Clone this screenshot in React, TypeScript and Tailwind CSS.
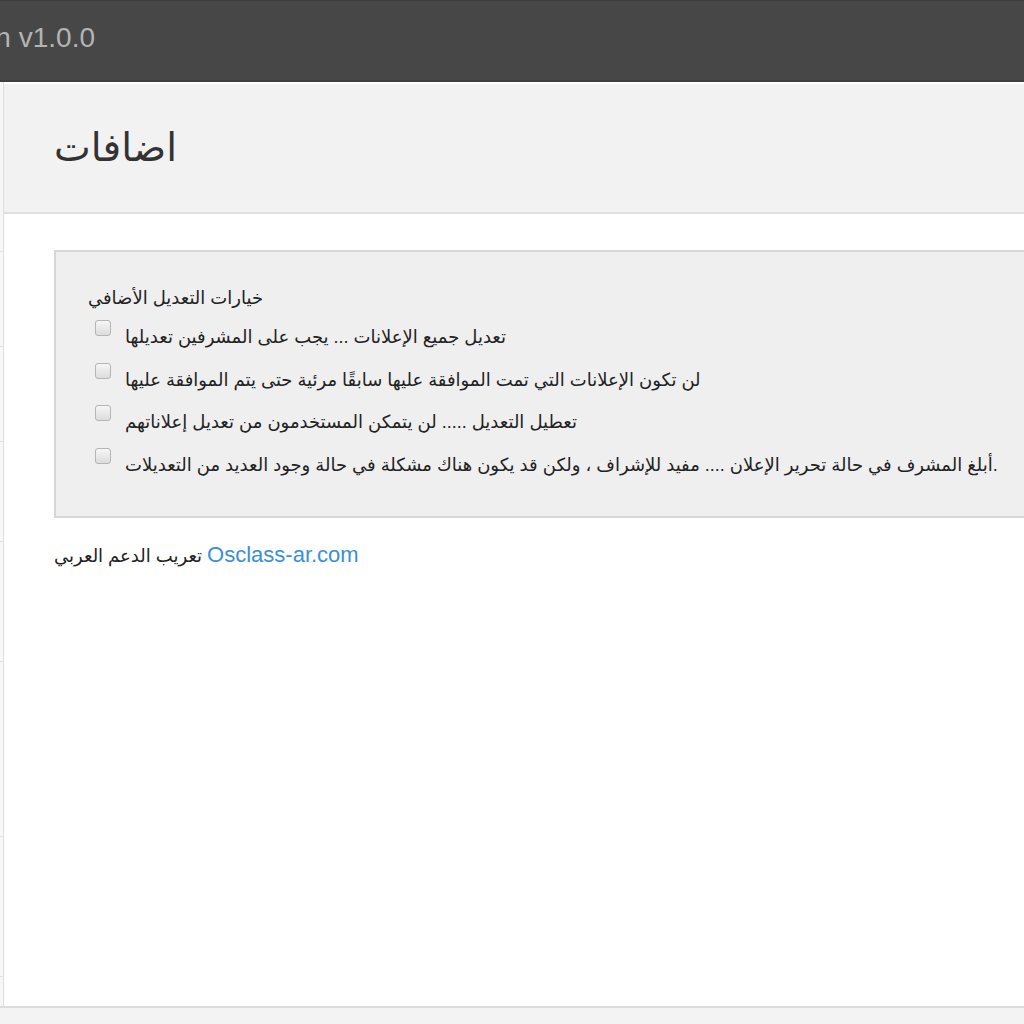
const font = { fontFamily: '"Liberation Sans", "DejaVu Sans", Arial, sans-serif' }

const options = [
  'تعديل جميع الإعلانات ... يجب على المشرفين تعديلها',
  'لن تكون الإعلانات التي تمت الموافقة عليها سابقًا مرئية حتى يتم الموافقة عليها',
  'تعطيل التعديل ..... لن يتمكن المستخدمون من تعديل إعلاناتهم',
  'أبلغ المشرف في حالة تحرير الإعلان .... مفيد للإشراف ، ولكن قد يكون هناك مشكلة في حالة وجود العديد من التعديلات.',
]

const sideTicks = [88, 95, 95, 100, 120, 175, 140]

export default function App() {
  return (
    <div className="h-[1024px] w-[1024px] overflow-hidden flex flex-col bg-white" style={font}>
      {/* top bar */}
      <div className="h-[82px] shrink-0 bg-[#474747] border-t border-[#3c3c3c] border-b-2 border-b-[#3e3e3e] flex items-center">
        <div className="w-[95px] overflow-hidden flex justify-end -mt-[6px]">
          <span className="whitespace-nowrap shrink-0 text-[28px] text-[#b4b4b4]">Moderation v1.0.0</span>
        </div>
      </div>

      <div className="flex-1 flex min-h-0">
        {/* sidebar edge */}
        <div className="w-[4px] shrink-0 border-r border-[#dedede] bg-[#f7f7f7] flex flex-col pt-[82px]">
          {sideTicks.map((h, i) => (
            <div key={i} className="border-b border-[#e2e2e2]" style={{ height: h }} />
          ))}
        </div>

        <div className="flex-1 flex flex-col min-w-0">
          {/* page title */}
          <div className="h-[130px] shrink-0 mt-[2px] bg-[#f2f2f2] border-b-2 border-[#e0e0e0] flex items-center pl-[50px]">
            <h1 className="text-[39px] text-[#333] leading-none -mt-[2px]">اضافات</h1>
          </div>

          {/* content */}
          <div className="flex-1 pl-[50px] pt-[36px]">
            <div className="w-[1000px] h-[268px] bg-[#efefef] border-2 border-[#d6d6d6] pl-[32px] pt-[34px]">
              <p className="text-[18px] text-[#222] leading-[24px] mb-[10px]">خيارات التعديل الأضافي</p>
              <div className="flex flex-col">
                {options.map((t) => (
                  <label key={t} className="h-[42.5px] flex items-start gap-[14px] pl-[7px]">
                    <input
                      type="checkbox"
                      className="appearance-none w-[16px] h-[16px] shrink-0 rounded-[3px] border border-[#b5b5b5] bg-gradient-to-b from-[#f6f6f6] to-[#dcdcdc]"
                    />
                    <span className="text-[18px] text-[#222] leading-[20px] mt-[7px] whitespace-nowrap">{t}</span>
                  </label>
                ))}
              </div>
            </div>

            <p className="mt-[20px] text-[18px] text-[#222] whitespace-nowrap">
              تعريب الدعم العربي <a className="text-[22px] text-[#3b8fd5]">Osclass-ar.com</a>
            </p>
          </div>
        </div>
      </div>

      {/* bottom strip */}
      <div className="h-[18px] shrink-0 bg-[#f3f3f3] border-t-2 border-[#dcdcdc]" />
    </div>
  )
}
